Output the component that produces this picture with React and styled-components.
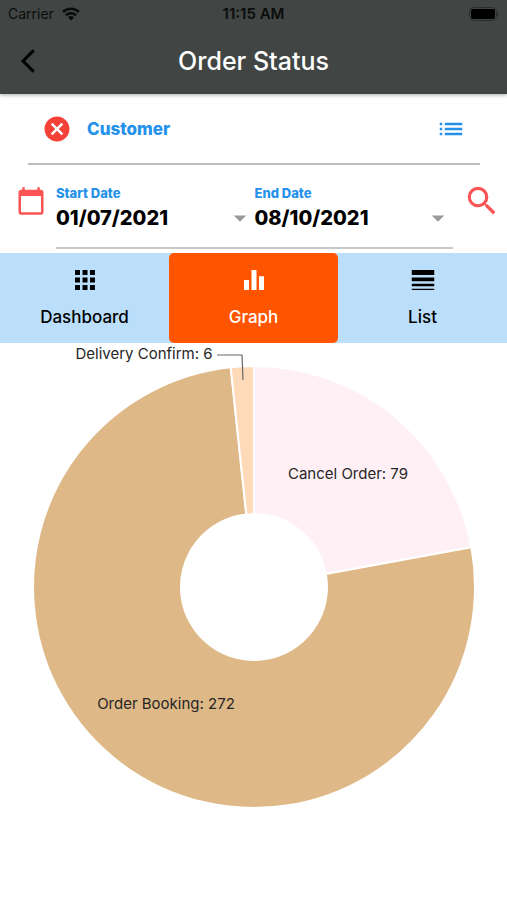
import { useState } from 'react';
import styled, { createGlobalStyle } from 'styled-components';
import {
  MdApps,
  MdArrowBackIosNew,
  MdArrowDropDown,
  MdCalendarToday,
  MdCancel,
  MdEqualizer,
  MdLineWeight,
  MdList,
  MdSearch,
} from 'react-icons/md';

const GlobalStyle = createGlobalStyle`
  * {
    box-sizing: border-box;
  }

  body {
    margin: 0;
    background-color: #fff;
    font-family: Inter, 'Liberation Sans', sans-serif;
  }

  button,
  input {
    font-family: inherit;
  }
`;

const Page = styled.div`
  min-height: 100vh;
  display: flex;
  flex-direction: column;
`;

const TopArea = styled.header`
  background-color: #414644;
  box-shadow: 0 1px 4px rgba(0, 0, 0, 0.35);
`;

const StatusBar = styled.div`
  display: grid;
  grid-template-columns: 1fr auto 1fr;
  align-items: center;
  height: 27px;
  padding: 0 8px;
  color: #0b0c0c;
  font-size: 14px;
`;

const Carrier = styled.div`
  display: flex;
  align-items: center;
  gap: 8px;
`;

const Clock = styled.time`
  font-size: 15px;
  font-weight: 600;
`;

const BatteryIcon = styled.svg`
  justify-self: end;
`;

const AppBar = styled.div`
  display: grid;
  grid-template-columns: 56px 1fr 56px;
  align-items: center;
  height: 67px;
`;

const Title = styled.h1`
  margin: 0;
  color: #fff;
  font-size: 25px;
  font-weight: 500;
  line-height: 30px;
  text-align: center;
`;

const IconButton = styled.button`
  display: flex;
  align-items: center;
  justify-content: center;
  padding: 0;
  border: none;
  background: none;
  color: ${({ $color }) => $color};
  font-size: ${({ $size }) => $size || 30}px;
  cursor: pointer;
`;

const CustomerRow = styled.div`
  display: flex;
  align-items: center;
  gap: 15px;
  height: 71px;
  margin: 0 27px 0 28px;
  padding: 0 14px;
  border-bottom: 2px solid #bdbdbd;
`;

const CustomerInput = styled.input`
  flex: 1;
  min-width: 0;
  padding: 0;
  border: none;
  outline: none;
  background: none;
  color: #2491eb;
  font-size: 17px;
  font-weight: 800;

  &::placeholder {
    color: #2491eb;
    opacity: 1;
  }
`;

const DateRow = styled.div`
  display: grid;
  grid-template-columns: 56px 1fr 54px;
  align-items: start;
  height: 88px;
  padding-top: 17px;
`;

const DateIcon = styled.div`
  display: flex;
  padding: 4px 0 0 16px;
  color: #fb5455;
  font-size: 30px;
`;

const DateFields = styled.div`
  display: grid;
  grid-template-columns: 1fr 1fr;
  height: 67px;
  padding-top: 2px;
  border-bottom: 2px solid #c8c8c8;
`;

const DateField = styled.div`
  display: flex;
  flex-direction: column;
`;

const DateLabel = styled.label`
  color: #2491eb;
  font-size: 13px;
  font-weight: 800;
  line-height: 18px;
`;

const DateButton = styled.button`
  display: flex;
  align-items: center;
  justify-content: space-between;
  height: 32px;
  padding: 0;
  border: none;
  background: none;
  color: #000;
  font-size: 20px;
  font-weight: 800;
  cursor: pointer;

  svg {
    color: #9a9a9a;
    font-size: 30px;
  }
`;

const SearchButton = styled(IconButton)`
  justify-content: flex-end;
  padding-right: 6px;
`;

const Tabs = styled.nav`
  display: grid;
  grid-template-columns: repeat(3, 1fr);
  background-color: #bbdefb;
`;

const Tab = styled.button`
  display: flex;
  flex-direction: column;
  align-items: center;
  gap: 10px;
  height: 90px;
  padding: 12px 0 0;
  border: none;
  border-radius: 5px;
  background-color: ${({ $active }) => ($active ? '#ff5500' : 'transparent')};
  color: ${({ $active }) => ($active ? '#fff' : '#000')};
  font-size: 17px;
  font-weight: 500;
  line-height: 24px;
  cursor: pointer;

  svg {
    font-size: 30px;
  }
`;

const Chart = styled.svg`
  display: block;
  width: 100%;
`;

const SliceLabel = styled.text`
  fill: #262626;
  font-size: 15px;
`;

const CENTER = { x: 254, y: 244 };
const OUTER_RADIUS = 221;
const INNER_RADIUS = 73;

const slices = [
  { label: 'Cancel Order', value: 79, color: '#fff0f5', x: 348, y: 136 },
  { label: 'Order Booking', value: 272, color: '#deb887', x: 166, y: 366 },
  { label: 'Delivery Confirm', value: 6, color: '#ffdab9', x: 144, y: 16, leader: '217,12 242,12 243,37' },
];

const total = slices.reduce((sum, slice) => sum + slice.value, 0);

const pointAt = (radius, fraction) => {
  const angle = fraction * 2 * Math.PI;
  return `${CENTER.x + radius * Math.sin(angle)} ${CENTER.y - radius * Math.cos(angle)}`;
};

const slicePath = (start, end) => {
  const large = end - start > 0.5 ? 1 : 0;
  return [
    `M ${pointAt(OUTER_RADIUS, start)}`,
    `A ${OUTER_RADIUS} ${OUTER_RADIUS} 0 ${large} 1 ${pointAt(OUTER_RADIUS, end)}`,
    `L ${pointAt(INNER_RADIUS, end)}`,
    `A ${INNER_RADIUS} ${INNER_RADIUS} 0 ${large} 0 ${pointAt(INNER_RADIUS, start)}`,
    'Z',
  ].join(' ');
};

const tabs = [
  { name: 'Dashboard', Icon: MdApps },
  { name: 'Graph', Icon: MdEqualizer },
  { name: 'List', Icon: MdLineWeight },
];

const dates = [
  { id: 'start-date', label: 'Start Date', value: '01/07/2021' },
  { id: 'end-date', label: 'End Date', value: '08/10/2021' },
];

const OrderChart = () => {
  let count = 0;
  const arcs = slices.map((slice) => {
    const start = count / total;
    count += slice.value;
    return { ...slice, path: slicePath(start, count / total) };
  });

  return (
    <Chart viewBox="0 0 507 480" role="img" aria-label="Orders by status">
      {arcs.map(({ label, path, color }) => (
        <path key={label} d={path} fill={color} stroke="#fff" strokeWidth="2" />
      ))}
      {arcs.map(({ label, value, x, y, leader }) => (
        <g key={label}>
          {leader && <polyline points={leader} fill="none" stroke="#666" strokeWidth="1.2" />}
          <SliceLabel x={x} y={y} textAnchor="middle">{`${label}: ${value}`}</SliceLabel>
        </g>
      ))}
    </Chart>
  );
};

const App = () => {
  const [activeTab, setActiveTab] = useState('Graph');
  const [customer, setCustomer] = useState('');

  return (
    <Page>
      <GlobalStyle />
      <TopArea>
        <StatusBar>
          <Carrier>
            Carrier
            <svg width="18" height="14" viewBox="0 0 18 14" fill="none" stroke="currentColor" strokeWidth="2.6">
              <path d="M1 5a11.6 11.6 0 0 1 16 0" />
              <path d="M3.9 8.3a7.4 7.4 0 0 1 10.2 0" />
              <path d="M9 13.6 6 10.5a4.3 4.3 0 0 1 6 0z" fill="currentColor" stroke="none" />
            </svg>
          </Carrier>
          <Clock>11:15 AM</Clock>
          <BatteryIcon width="30" height="14" viewBox="0 0 30 14">
            <rect x="0.5" y="0.5" width="27" height="13" rx="4" fill="none" stroke="#2b2f2d" />
            <rect x="2" y="2" width="24" height="10" rx="2" fill="#000" />
            <path d="M28.5 5c1.6.6 1.6 3.4 0 4z" fill="#2b2f2d" />
          </BatteryIcon>
        </StatusBar>
        <AppBar>
          <IconButton $color="#000" $size={28} aria-label="Back">
            <MdArrowBackIosNew />
          </IconButton>
          <Title>Order Status</Title>
        </AppBar>
      </TopArea>

      <CustomerRow>
        <IconButton $color="#f44336" aria-label="Clear customer" onClick={() => setCustomer('')}>
          <MdCancel />
        </IconButton>
        <CustomerInput
          aria-label="Customer"
          placeholder="Customer"
          value={customer}
          onChange={(e) => setCustomer(e.target.value)}
        />
        <IconButton $color="#2491eb" aria-label="Choose customer">
          <MdList />
        </IconButton>
      </CustomerRow>

      <DateRow>
        <DateIcon>
          <MdCalendarToday />
        </DateIcon>
        <DateFields>
          {dates.map(({ id, label, value }) => (
            <DateField key={id}>
              <DateLabel htmlFor={id}>{label}</DateLabel>
              <DateButton id={id}>
                {value}
                <MdArrowDropDown />
              </DateButton>
            </DateField>
          ))}
        </DateFields>
        <SearchButton $color="#fb5455" $size={38} aria-label="Search">
          <MdSearch />
        </SearchButton>
      </DateRow>

      <Tabs>
        {tabs.map(({ name, Icon }) => (
          <Tab key={name} $active={name === activeTab} onClick={() => setActiveTab(name)}>
            <Icon />
            {name}
          </Tab>
        ))}
      </Tabs>

      <OrderChart />
    </Page>
  );
};

export default App;
